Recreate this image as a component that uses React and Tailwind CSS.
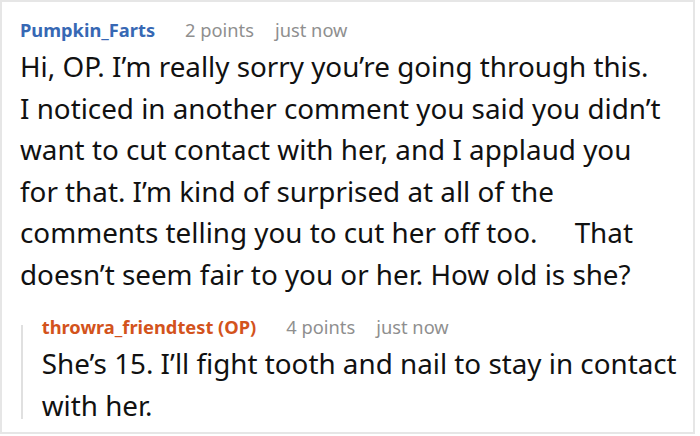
import React from 'react'

const font = { fontFamily: '"Noto Sans", "Open Sans", sans-serif' }

const Meta = ({ name, color, points }) => (
  <div className="flex items-baseline text-[18.3px] leading-[24px]">
    <span className={`font-bold ${color}`}>{name}</span>
    <span className="ml-[30px] text-[#8f8f8f]">{points}</span>
    <span className="ml-[21px] text-[#8f8f8f]">just now</span>
  </div>
)

export default function App() {
  return (
    <div className="w-[700px] h-[436px] bg-white" style={font}>
      <div className="w-[695px] h-[434px] border-2 border-[#e6e6e6] pl-[18px] pt-[16px] text-[#111]">
        <div className="pr-[30px]">
          <Meta name="Pumpkin_Farts" color="text-[#3768b4]" points="2 points" />
          <p className="mt-[4px] text-[27.8px] leading-[41.5px]">
            Hi, OP. I’m really sorry you’re going through this. I noticed in another comment you said you didn’t want to cut contact with her, and I applaud you for that. I’m kind of surprised at all of the comments telling you to cut her off too.<span className="inline-block w-[30px]" /> That doesn’t seem fair to you or her. How old is she?
          </p>
        </div>
        <div className="mt-[20px] flex">
          <div className="w-[2px] ml-[1px] mt-[10px] mb-[7px] bg-[#e0e0e0]" />
          <div className="pl-[19px]">
            <Meta name="throwra_friendtest (OP)" color="text-[#d3531c]" points="4 points" />
            <p className="mt-[4px] text-[27.8px] leading-[41.5px]">
              She’s 15. I’ll fight tooth and nail to stay in contact with her.
            </p>
          </div>
        </div>
      </div>
    </div>
  )
}
